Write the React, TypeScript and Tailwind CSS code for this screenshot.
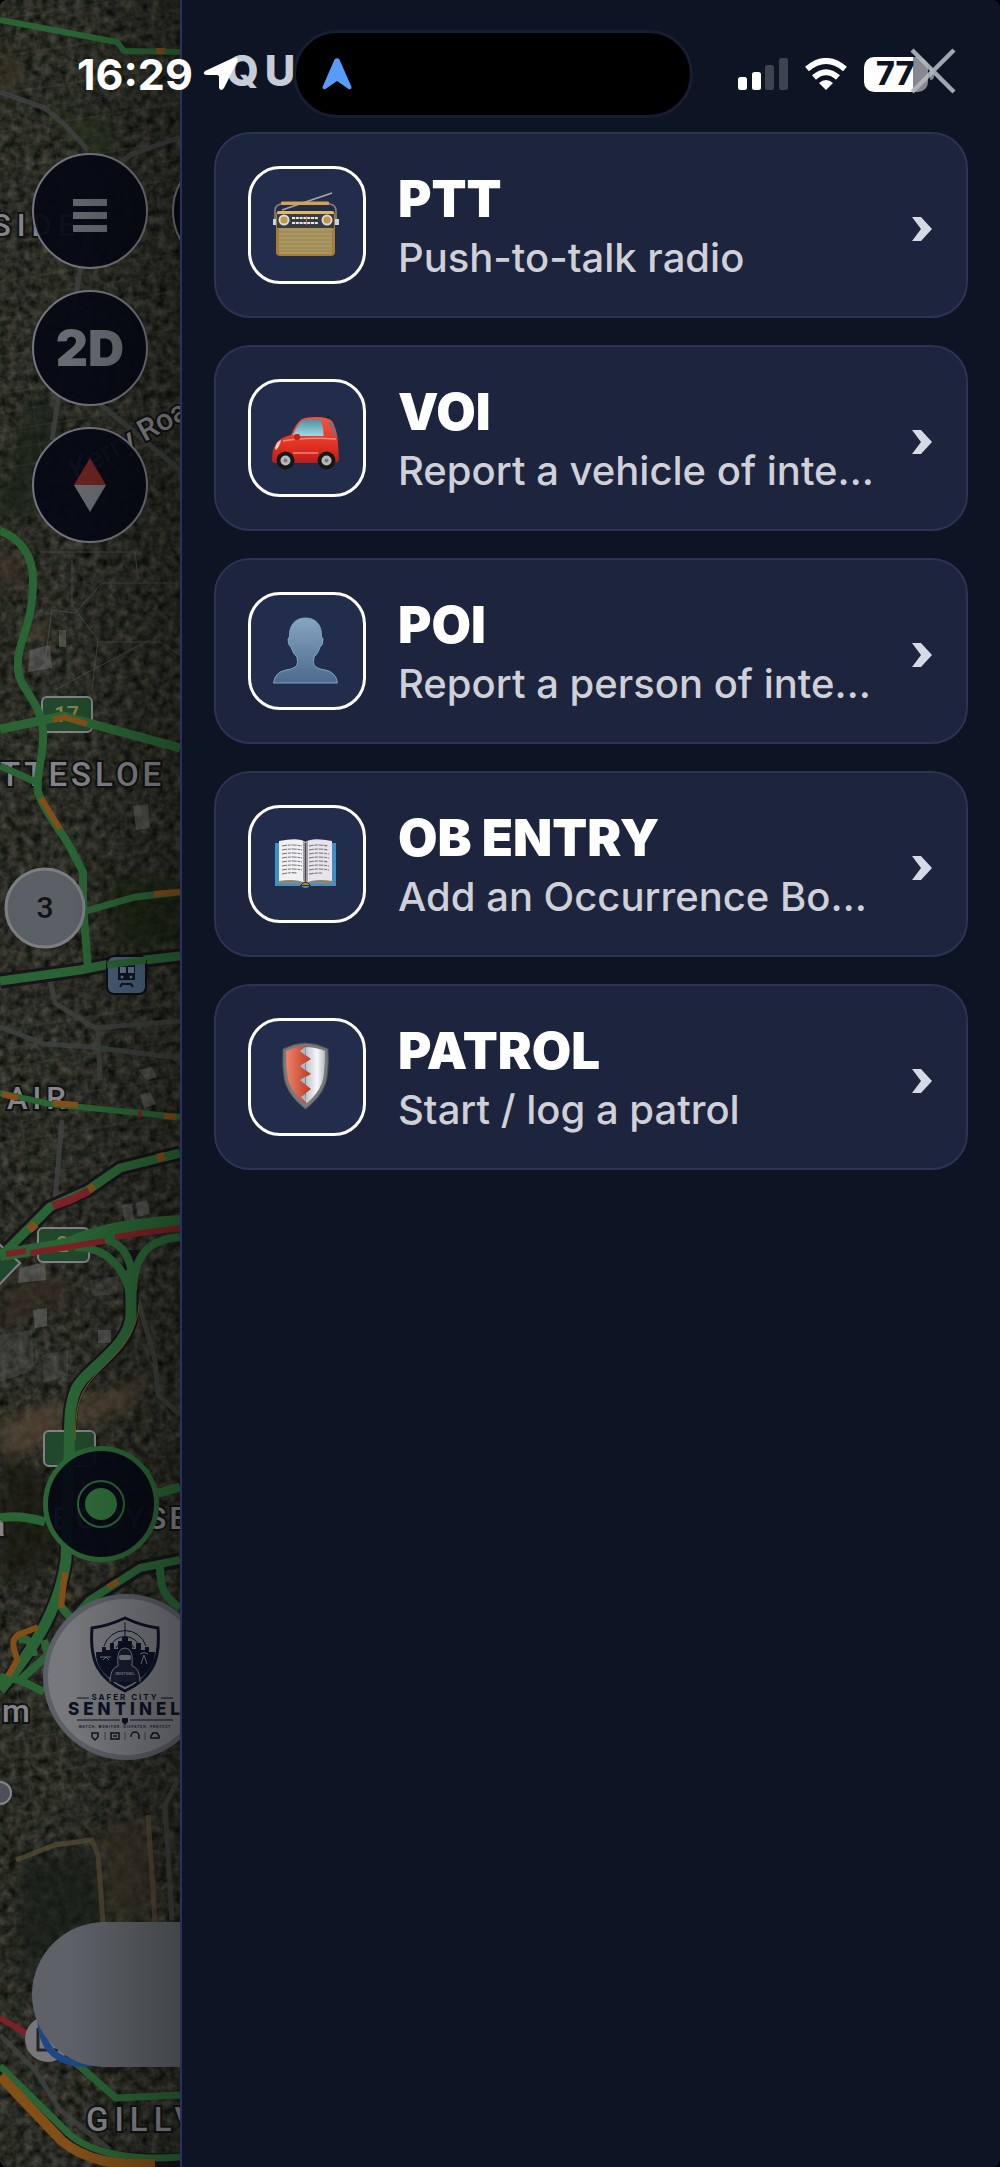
import React from 'react';

interface QuickAction {
  id: string;
  title: string;
  description: string;
  icon: React.ReactNode;
}

const RadioIcon = () => (
  <svg viewBox="0 0 72 72" className="w-18 h-18" aria-hidden="true">
    <path d="M11 21 L61 4" stroke="#a9a6a3" strokeWidth="1.6" />
    <path d="M4 34 V22 Q4 16 10 15 H59 Q65 16 65 22 V34" fill="none" stroke="#8d8578" strokeWidth="1.6" />
    <rect x="10" y="12.500" width="48" height="3.400" rx="1" fill="#d3a351" />
    <path d="M2 30 h4 v6 h-4 z M64 30 h4 v6 h-4 z" fill="#cdd3da" />
    <rect x="5" y="22" width="59" height="45" rx="4" fill="#a87c34" />
    <rect x="6" y="22" width="57" height="4" rx="2" fill="#e3b75f" />
    <rect x="6" y="25" width="57" height="14" fill="#393b40" />
    <rect x="8" y="39" width="53" height="26" rx="1.500" fill="#a99660" />
    <path d="M8 43 H61 M8 47 H61 M8 51 H61 M8 55 H61 M8 59 H61 M8 62 H61" stroke="#95824c" strokeWidth="0.800" />
    <circle cx="13" cy="31" r="5.500" fill="#dcdad5" />
    <circle cx="13" cy="31" r="3.600" fill="#c1964a" />
    <circle cx="56" cy="31" r="5.500" fill="#dcdad5" />
    <circle cx="56" cy="31" r="3.600" fill="#c1964a" />
    <path d="M21 29 H47 M21 34 H47" stroke="#e8e8e6" strokeWidth="2" strokeDasharray="3 0.800" />
    <path d="M35.500 27 V36" stroke="#d2642c" strokeWidth="1" />
  </svg>
);

const CarIcon = () => (
  <svg viewBox="0 0 72 72" className="w-18 h-18" aria-hidden="true">
    <defs>
      <linearGradient id="carBody" x1="0" y1="0" x2="0" y2="1">
        <stop offset="0" stopColor="#f2543f" />
        <stop offset="0.600" stopColor="#e23325" />
        <stop offset="1" stopColor="#b81c17" />
      </linearGradient>
      <linearGradient id="carGlass" x1="0" y1="0" x2="0" y2="1">
        <stop offset="0" stopColor="#4c92ab" />
        <stop offset="1" stopColor="#a5d6e4" />
      </linearGradient>
    </defs>
    <path d="M56 17 L57.500 14" stroke="#111" strokeWidth="1" />
    <path d="M1 58 Q1 46 6 40 Q11 35 20 33 Q25 21 31 17 Q36 15 45 15 Q57 15 61 19 Q66 27 67 40 L68 58 Q67 61 62 61 H5 Q1 61 1 58 Z" fill="url(#carBody)" />
    <path d="M22 33 Q27 21 32 18.500 Q40 17 50 18 Q53 26 52.500 34 H24 Z" fill="url(#carGlass)" />
    <path d="M58 20 Q62 24 65 34" stroke="#4c7f94" strokeWidth="2" fill="none" />
    <path d="M4 46 Q6 39 10 38 Q9 44 5 48 Z" fill="#f6d5cc" />
    <path d="M12 39 Q34 35 65 37" stroke="#f98a74" strokeWidth="1.500" fill="none" />
    <path d="M22 51 H47" stroke="#f98a74" strokeWidth="1.400" />
    <rect x="23" y="32" width="6" height="6" rx="2" fill="#c22018" />
    <circle cx="14.500" cy="58.500" r="9" fill="#161616" />
    <circle cx="14.500" cy="58.500" r="5" fill="#b8b8ba" />
    <circle cx="14.500" cy="58.500" r="2" fill="#78787a" />
    <circle cx="55.500" cy="58.500" r="9" fill="#161616" />
    <circle cx="55.500" cy="58.500" r="5" fill="#b8b8ba" />
    <circle cx="55.500" cy="58.500" r="2" fill="#78787a" />
  </svg>
);

const PersonIcon = () => (
  <svg viewBox="0 0 72 72" className="w-18 h-18" aria-hidden="true">
    <defs>
      <linearGradient id="bust" x1="0" y1="0" x2="0" y2="1">
        <stop offset="0" stopColor="#86a5c2" />
        <stop offset="1" stopColor="#4b6a8d" />
      </linearGradient>
    </defs>
    <path
      d="M34.500 3 C44 3 51 9 50.500 22 Q53 23 51.500 28 Q51 31 49 32 Q47 39 43 42 Q42 47 43 50 Q46 54 54 55 Q65 57 66.500 68 H2.500 Q4 57 15 55 Q23 54 26 50 Q27 47 26 42 Q22 39 20 32 Q18 31 17.500 28 Q16 23 18.500 22 C18 9 25 3 34.500 3 Z"
      fill="url(#bust)"
      stroke="#7ba6c6"
      strokeWidth="1"
    />
  </svg>
);

const BookIcon = () => (
  <svg viewBox="0 0 72 72" className="w-18 h-18" aria-hidden="true">
    <path d="M4 15 H65 V58 H39 Q34.500 62 30 58 H4 Z" fill="#3f90c6" />
    <path d="M7 53 Q22 50 34.500 56 Q47 50 62 53 V56 H7 Z" fill="#8b8478" />
    <path d="M8 13 Q28 9 34.500 14 V55 Q24 50 8 53 Z" fill="#f1f0f3" />
    <path d="M61 13 Q41 9 34.500 14 V55 Q45 50 61 53 Z" fill="#e6e4ea" />
    <path d="M32 13 Q34.500 14 34.500 16 Q34.500 14 37 13 V53 L34.500 55 L32 53 Z" fill="#a09ca2" />
    <path d="M34.500 15 V55" stroke="#4a474c" strokeWidth="1.200" />
    <path
      d="M11 18 Q22 16 31 18 M11 22 Q22 20 31 22 M11 26 Q22 24 31 26 M11 30 Q22 28 31 30 M11 34 Q22 32 31 34 M11 38 Q22 36 31 38 M11 42 Q22 40 31 42 M11 46 Q20 44 26 45 M38 18 Q47 16 57 18 M38 22 Q47 20 57 22 M38 26 Q47 24 58 26 M38 30 Q47 28 58 30 M38 34 Q47 32 57 34 M38 38 Q47 36 58 38 M38 42 Q47 40 58 42 M38 46 Q44 45 51 45"
      stroke="#77747c"
      strokeWidth="1.100"
      strokeDasharray="5 0.800 3 0.800"
      fill="none"
    />
    <path d="M29.500 57.500 Q34.500 51 39.500 57.500 Z" fill="#b88b28" stroke="#3a2c14" strokeWidth="1" />
  </svg>
);

const ShieldIcon = () => (
  <svg viewBox="0 0 72 72" className="w-18 h-18" aria-hidden="true">
    <defs>
      <linearGradient id="shieldRed" x1="0" y1="0" x2="1" y2="0">
        <stop offset="0" stopColor="#f0826b" />
        <stop offset="1" stopColor="#b93b22" />
      </linearGradient>
      <linearGradient id="shieldWhite" x1="0" y1="0" x2="1" y2="0">
        <stop offset="0" stopColor="#b9c2cd" />
        <stop offset="0.600" stopColor="#f7f8fa" />
        <stop offset="1" stopColor="#b4bbc2" />
      </linearGradient>
    </defs>
    <path d="M34.500 2 Q45 2 57 8 Q58 34 54 44 Q49 57 34.500 68 Q20 57 15 44 Q11 34 12 8 Q24 2 34.500 2 Z" fill="#77787a" stroke="#525356" strokeWidth="1" />
    <path d="M34.500 6 Q44 6 54 10 Q54 33 51 42 Q46 54 35 63 Z" fill="url(#shieldWhite)" />
    <path d="M37 5 L29 10 L40 18 L29 25 L40 33 L29 39 L40 48 L30 56 L36 62 L34.500 63 Q23 54 18 42 Q15 33 15 10 Q26 5 37 5 Z" fill="url(#shieldRed)" />
    <path d="M34 6 L29 10 L34 14 Z M34 21.500 L29 25 L34 29 Z M34 36 L29 39 L34 43 Z M34 53 L30 56 L35 61 Z" fill="#aeb9c6" />
  </svg>
);

const QUICK_ACTIONS: QuickAction[] = [
  { id: 'ptt', title: 'PTT', description: 'Push-to-talk radio', icon: <RadioIcon /> },
  { id: 'voi', title: 'VOI', description: 'Report a vehicle of interest', icon: <CarIcon /> },
  { id: 'poi', title: 'POI', description: 'Report a person of interest', icon: <PersonIcon /> },
  { id: 'ob', title: 'OB ENTRY', description: 'Add an Occurrence Book entry', icon: <BookIcon /> },
  { id: 'patrol', title: 'PATROL', description: 'Start / log a patrol', icon: <ShieldIcon /> },
];

const MapCanvas = () => (
  <svg
    viewBox="0 0 180 2167"
    preserveAspectRatio="xMinYMin slice"
    className="absolute inset-0 w-full h-full"
    aria-hidden="true"
  >
    <defs>
      <filter id="ground" x="0" y="0" width="100%" height="100%" colorInterpolationFilters="sRGB">
        <feTurbulence type="fractalNoise" baseFrequency="0.120" numOctaves="4" seed="4" />
        <feColorMatrix values="0.300 0.100 0 0 -0.035  0.280 0.120 0 0 -0.030  0.260 0.080 0 0 -0.030  0 0 0 0 1" />
      </filter>
      <filter id="soft">
        <feGaussianBlur stdDeviation="7" />
      </filter>
      <pattern id="blocks" width="31" height="37" patternUnits="userSpaceOnUse" patternTransform="rotate(-9)">
        <path d="M0 0 H31 M0 19 H31 M0 0 V37" stroke="#4a4d48" strokeWidth="1" opacity="0.450" fill="none" />
      </pattern>
    </defs>

    <rect width="180" height="2167" fill="#23261f" />
    <rect width="180" height="2167" filter="url(#ground)" />

    {/* Parks, open ground and mine dumps */}
    <g filter="url(#soft)" opacity="0.650">
      <path d="M0 40 L25 70 L15 95 L0 90 Z" fill="#3a3424" />
      <path d="M45 90 L80 120 L120 130 L105 165 L70 140 Z" fill="#28301c" />
      <path d="M35 390 L60 420 L45 480 L10 530 L0 500 Z" fill="#172314" />
      <path d="M0 545 L22 560 L12 590 L0 585 Z" fill="#47382a" />
      <path d="M110 880 H180 V945 H115 Z" fill="#15200f" />
      <path d="M28 622 L50 625 L45 645 L28 640 Z" fill="#4b4130" />
      <path d="M0 1290 L60 1270 L70 1300 L0 1330 Z" fill="#352c22" />
      <path d="M60 1405 L150 1378 L130 1410 L70 1430 Z M0 1420 L60 1400 V1440 L0 1460 Z" fill="#5a4a38" />
      <path d="M0 1450 L60 1480 V1560 L0 1590 Z" fill="#12190f" />
      <path d="M18 1860 L95 1845 L102 1925 L40 1960 L20 1990 Z" fill="#131c14" />
      <path d="M102 1830 L150 1815 L155 1920 H105 Z" fill="#3a3627" />
    </g>
    <path d="M16 1860 L55 1845 L92 1840 L98 1855 L103 1922 M148 1815 L155 1922" fill="none" stroke="#5c5039" strokeWidth="5" opacity="0.650" />

    <rect y="0" width="180" height="470" fill="url(#blocks)" />
    <rect y="1000" width="180" height="180" fill="url(#blocks)" />
    <rect y="1690" width="180" height="100" fill="url(#blocks)" />
    <path
      d="M45 660 L52 610 L75 613 L102 583 H180 M72 560 V605 L98 640 L92 690 M98 642 H160 L180 655 M55 690 L92 670 L150 640 M40 552 H135 L138 580"
      fill="none"
      stroke="#4b4f4c"
      strokeWidth="1"
      opacity="0.800"
    />
    <g fill="#77777a" opacity="0.450">
      <path d="M30 650 L50 645 L52 668 L28 672 Z M133 806 L148 804 L150 828 L136 830 Z M59 630 h7 v17 h-7 Z M20 1268 L45 1262 L46 1280 L18 1283 Z M98 1330 h13 v13 h-13 Z M122 1205 l10 -2 l2 18 l-9 2 Z M136 1203 l11 -3 l3 14 l-12 3 Z M33 1310 l14 -2 v18 l-12 2 Z" />
      <path d="M138 1070 l14 -3 l5 10 l-10 3 z M140 1095 l10 -3 l6 12 l-12 4 z" />
      <path d="M0 1335 L32 1330 L34 1370 L0 1382 Z M42 1355 l26 -5 v25 l-24 8 z M90 1280 l28 -4 v18 l-26 2 z" opacity="0.500" />
    </g>

    {/* Unlit streets */}
    <g fill="none" stroke="#3e4240" strokeWidth="5" opacity="0.850">
      <path d="M0 92 L45 108 L65 125 L88 150" />
      <path d="M180 137 L130 155 L95 185 L75 300 L58 400 L52 440" />
      <path d="M100 404 L180 470" />
      <path d="M50 980 L55 1003 L95 1028 L180 1021 M0 1027 L45 1044 L90 1047 L180 1058 M98 1030 L100 1080" />
      <path d="M62 1120 L55 1200" />
      <path d="M138 1300 L155 1360 L158 1395 L180 1415" />
      <path d="M165 1805 L172 1920 M178 1780 L165 1805" />
      <path d="M0 2035 L35 2070 L60 2110 L110 2150" />
    </g>

    {/* Dark casing under the main roads */}
    <g fill="none" stroke="#17141a" strokeWidth="15">
      <path d="M0 981 L80 970 L110 964 L180 956" />
      <path d="M0 1257 L50 1207 L88 1190 L120 1168 L180 1153" />
      <path d="M131 1250 V1315 C129 1350 82 1370 75 1392 C68 1410 70 1430 69 1460 L66 1560 C62 1590 50 1630 0 1690" />
      <path d="M75 1612 L90 1600 L140 1568 L180 1560" />
      <path d="M0 2072 L66 2140 C90 2158 130 2163 180 2160" />
    </g>

    {/* Route shields */}
    <g fill="#21482a" stroke="#828087" strokeWidth="2">
      <rect x="42" y="697" width="50" height="35" rx="5" />
      <rect x="38" y="1228" width="51" height="34" rx="5" />
      <rect x="44" y="1431" width="51" height="35" rx="5" />
      <path d="M-2 1243 L20 1263 L-2 1286 Z" />
    </g>
    <text x="54" y="722" fontSize="22" fill="#887f45" className="font-['Roboto',sans-serif] font-medium">17</text>
    <text x="56" y="1252" fontSize="22" fill="#887f45" className="font-['Roboto',sans-serif] font-medium">2</text>

    <g fill="#848389" stroke="#101311" strokeWidth="4" paintOrder="stroke" className="font-['Roboto',sans-serif] font-medium">
      <text x="-8" y="236" fontSize="31" letterSpacing="6">SIDE</text>
      <text x="0" y="786" fontSize="33" letterSpacing="4">TTESLOE</text>
      <text x="7" y="1109" fontSize="31" letterSpacing="5">AIR</text>
      <text x="52" y="1529" fontSize="32" letterSpacing="3">BOOYSE</text>
      <text x="2" y="1722" fontSize="32">m</text>
      <text x="-12" y="1536" fontSize="32">a</text>
      <text x="86" y="2131" fontSize="33" letterSpacing="6">GILLVI</text>
      <text x="0" y="0" fontSize="30" transform="translate(76 480) rotate(-29)">Kerry Road</text>
    </g>

    {/* Live traffic */}
    <g fill="none" stroke="#2a6434" strokeWidth="8" strokeLinejoin="round">
      <path d="M0 20 L117 42 L124 51 L180 52" strokeWidth="6" />
      <path d="M0 531 C20 538 33 555 33 580 C33 630 16 640 18 670 C20 690 40 700 43 730 C45 755 35 775 38 792 C45 815 66 835 74 855 L83 872 L83 905 L88 968" />
      <path d="M0 729 L63 716 L180 748" strokeWidth="9" />
      <path d="M0 766 L38 783" strokeWidth="7" />
      <path d="M86 911 L135 897 L180 892" strokeWidth="7" />
      <path d="M0 981 L80 970 L110 964 L180 956" strokeWidth="9" />
      <path d="M0 1093 L50 1104 L180 1117" strokeWidth="6" />
      <path d="M0 1257 L50 1207 L88 1190 L120 1168 L180 1153" strokeWidth="9" />
      <path d="M0 1255 L80 1242 L130 1230 L180 1224" strokeWidth="12" />
      <path d="M60 1245 C100 1225 140 1222 180 1219" />
      <path d="M75 1247 C108 1247 126 1270 130 1295 M95 1237 C120 1240 130 1252 133 1280 M180 1237 C150 1240 135 1252 133 1290" />
      <path d="M131 1270 V1315 C129 1350 82 1370 75 1392 C68 1410 70 1430 69 1460 L66 1560 C62 1590 50 1630 0 1690" strokeWidth="11" />
      <path d="M0 1518 Q20 1514 45 1522 M155 1494 L180 1487" strokeWidth="9" />
      <path d="M20 1680 L48 1655 L44 1640 M60 1605 L72 1620 L90 1600 L140 1568 L180 1560 M160 1565 C160 1590 165 1597 180 1608 M0 1677 L20 1680 L44 1692 M18 1640 Q32 1635 34 1656" />
      <path d="M75 2062 L116 2098 L180 2095" strokeWidth="7" />
      <path d="M0 2066 L68 2133 C90 2153 130 2161 180 2157" strokeWidth="7" />
    </g>
    <g fill="none" stroke="#824f18" strokeWidth="6">
      <path d="M156 51 H165" />
      <path d="M53 720 L64 717 L87 724 M41 798 L60 829" />
      <path d="M154 894 L180 892" />
      <path d="M2 1094 L18 1098 M53 1103 L78 1105 M164 1116 L176 1117" />
      <path d="M29 1230 L36 1224 M89 1190 L94 1186 M157 1158 L165 1156" strokeWidth="8" />
      <path d="M65 1572 L61 1608 M108 1587 L118 1581" />
      <path d="M38 1627 L18 1635 C8 1642 17 1655 17 1660 L8 1676" />
      <path d="M0 2076 L62 2141 C85 2160 115 2166 155 2164" strokeWidth="10" />
    </g>
    <path d="M139 1305 C137 1345 95 1370 84 1390 C76 1405 76 1420 75 1440" fill="none" stroke="#7d5228" strokeWidth="1" />
    <g fill="none" stroke="#7c2226" strokeWidth="6">
      <path d="M53 1206 L70 1200 L89 1191" strokeWidth="8" />
      <path d="M6 1254 L26 1251 M30 1253 L105 1241 M115 1237 L142 1233 L180 1228" />
      <path d="M138 1114 H142 M108 963 H112" />
      <path d="M0 2018 L26 2033" />
    </g>

    {/* Transit stop */}
    <rect x="107" y="956" width="39" height="38" rx="7" fill="#485f79" stroke="#0b0e14" strokeWidth="2" />
    <path d="M118 965 h17 v15 h-17 z" fill="#10141d" />
    <path d="M120 967 h6 v6 h-6 z M128 967 h6 v6 h-6 z" fill="#5d7693" />
    <circle cx="122" cy="977" r="1.500" fill="#5d7693" />
    <circle cx="131" cy="977" r="1.500" fill="#5d7693" />
    <path d="M120 987 L122 984 H131 L133 987" fill="none" stroke="#10141d" strokeWidth="2" />
    <path d="M107 965 L146 960" stroke="#2a6434" strokeWidth="7" />

    {/* Cluster marker */}
    <circle cx="45" cy="908" r="39" fill="#5b6067" stroke="#7d7e82" strokeWidth="3" />
    <text x="45" y="918" fontSize="30" textAnchor="middle" fill="#101214" className="font-['Roboto',sans-serif] font-medium">3</text>

    <circle cx="0" cy="1793" r="11" fill="#4c4f58" stroke="#85868a" strokeWidth="2" />
    <circle cx="48" cy="2039" r="23" fill="#77767b" />
    <path d="M38 2028 V2050 H58" fill="none" stroke="#22251f" strokeWidth="3" />
    <path d="M41 2022 C42 2050 60 2066 90 2063" fill="none" stroke="#1d4885" strokeWidth="7" />
  </svg>
);

const SentinelLogo = () => (
  <svg viewBox="0 0 166 166" className="w-[166px] h-[166px] shrink-0" role="img" aria-label="Safer City Sentinel">
    <g fill="none" stroke="#0b1224">
      <path d="M82 24 Q99 32 115 34 Q117 60 109 74 Q101 88 82 97 Q63 88 55 74 Q47 60 49 34 Q65 32 82 24 Z" strokeWidth="3" />
      <path d="M61 52 A22 22 0 0 1 103 52 M67 53 A16 16 0 0 1 97 53 M73 54 A10 10 0 0 1 91 54 M82 28 V46" strokeWidth="1" />
    </g>
    <path d="M53 58 h6 v-5 h4 v3 h4 v-7 h4 v6 h4 v-8 h4 v-4 h6 v4 h4 v8 h4 v-6 h5 v7 h4 v-3 h4 v5 h6 Q112 80 82 93 Q52 80 53 58 Z" fill="#0b1224" />
    <path d="M67 88 Q67 74 75 72 Q73 54 82 54 Q91 54 89 72 Q97 74 97 88" fill="#161d30" stroke="#77787c" strokeWidth="1" />
    <rect x="76" y="61" width="12" height="5" rx="2" fill="#77787c" />
    <path d="M57 63 h11 M60 66 l3 -3 l3 3 M98 70 l3 -9 l3 9 M97 60 q4 -3 8 0" stroke="#77787c" strokeWidth="1" fill="none" />
    <text x="82" y="81" fontSize="4" textAnchor="middle" fill="#77787c" className="font-['Inter',sans-serif] font-bold">SENTINEL</text>
    <path d="M34 104 H46 M118 104 H130 M34 126 H77 M87 126 H130" stroke="#0b1224" strokeWidth="1" />
    <text x="82" y="106" fontSize="8" letterSpacing="2" textAnchor="middle" fill="#0b1224" className="font-['Inter',sans-serif] font-bold">SAFER CITY</text>
    <text x="25" y="121" fontSize="17" letterSpacing="4" fill="#0b1224" className="font-['Inter',sans-serif] font-extrabold">SENTINEL</text>
    <path d="M79 124 h6 v4 l-3 3 l-3 -3 z" fill="#0b1224" />
    <text x="82" y="134" fontSize="3" letterSpacing="1" textAnchor="middle" fill="#0b1224" className="font-['Inter',sans-serif] font-bold">WATCH. MONITOR. DISPATCH. PROTECT</text>
    <g fill="none" stroke="#0b1224" strokeWidth="1.500">
      <path d="M49 139 h6 v4 l-3 3 l-3 -3 z M68 139 h8 v6 h-8 z M70 142 h4 M88 143 v-1 a4 4 0 0 1 8 0 v3 M108 144 v-2 l2 -3 h4 l2 3 v2 z" />
      <path d="M62 138 V146 M82 138 V146 M102 138 V146" strokeWidth="0.500" />
    </g>
  </svg>
);

const mapButton = 'w-29 h-29 shrink-0 rounded-full border-2 border-[#74757c] bg-[#060a15]/95 flex items-center justify-center';

const MapPane = () => (
  <section className="relative w-[18%] shrink-0 overflow-hidden bg-[#23261f]" aria-label="Map">
    <MapCanvas />

    {/* Floating map controls */}
    <div className="absolute top-[153px] left-8 flex flex-col gap-[21px]">
      <div className="flex gap-6">
        <button className={mapButton} aria-label="Menu">
          <span className="flex flex-col gap-[6px] pt-2">
            <span className="block w-[34px] h-[7px] bg-[#63666c]" />
            <span className="block w-[34px] h-[7px] bg-[#63666c]" />
            <span className="block w-[34px] h-[7px] bg-[#63666c]" />
          </span>
        </button>
        <button className={mapButton} aria-label="Layers" />
      </div>
      <button className={`${mapButton} text-[50px] leading-none font-black text-[#686c71]`}>2D</button>
      <button className={mapButton} aria-label="Reset north">
        <svg viewBox="0 0 32 54" className="w-8 h-[54px]" aria-hidden="true">
          <path d="M16 0 L32 27 H0 Z" fill="#6b2320" />
          <path d="M0 27 H32 L16 54 Z" fill="#676b6f" />
        </svg>
      </button>
    </div>

    <button
      className="absolute top-[1446px] left-[43px] w-29 h-29 rounded-full border-[5px] border-[#2a6434] bg-[#060a15]/95 flex items-center justify-center"
      aria-label="My location"
    >
      <span className="w-12 h-12 rounded-full border-2 border-[#2a6434] p-[6px]">
        <span className="block w-full h-full rounded-full bg-[#2f6c38]" />
      </span>
    </button>

    <button className="absolute top-[1594px] left-[43px] w-[166px] h-[166px] rounded-full border-[5px] border-[#5c5f68] bg-[#77787c] flex items-center justify-center">
      <SentinelLogo />
    </button>

    <div className="absolute bottom-[100px] left-8 w-[300px] h-[145px] rounded-full bg-[#5e6268]" />

    {/* Shadow cast by the drawer */}
    <div className="absolute inset-y-0 right-0 w-28 bg-linear-to-r from-black/0 to-black/30 pointer-events-none" />
  </section>
);

const ActionCard: React.FC<{ action: QuickAction }> = ({ action }) => (
  <button className="w-full flex items-center gap-8 text-left rounded-[36px] border-2 border-[#2c3453] bg-[#1d243d] pl-8 pr-[34px] py-[29px]">
    <span className="w-[118px] h-[118px] shrink-0 rounded-[32px] border-[3px] border-white bg-[#212d4a] flex items-center justify-center">
      {action.icon}
    </span>
    <span className="flex-1 min-w-0 pt-[6px]">
      <span className="block text-[51px] leading-[60px] font-black text-white">{action.title}</span>
      <span className="block text-[40px] leading-[58px] font-medium text-[#cfd0d8] truncate">{action.description}</span>
    </span>
    <svg viewBox="0 0 20 24" className="w-5 h-6 mt-2 shrink-0" aria-hidden="true">
      <path d="M0 0 H9 L20 12 L9 24 H0 L9 12 Z" fill="#d5dbe6" />
    </svg>
  </button>
);

const StatusBar = () => (
  <div className="absolute top-0 inset-x-0 h-[148px] flex items-center pl-[77px] pr-[66px] pointer-events-none">
    <div className="flex w-[216px] items-center gap-[10px]">
      <span className="text-[43px] leading-none font-bold text-white">16:29</span>
      <svg viewBox="0 0 36 34" className="w-9 h-[34px]" aria-hidden="true">
        <path d="M2 14 L30 1 Q36 -1 34 5 L21 31 Q18 35 16 31 V20 Q16 18 14 18 L3 18 Q-1 17 2 14 Z" fill="#fff" />
      </svg>
    </div>
    <div className="w-[400px] h-[88px] shrink-0 rounded-full border-[3px] border-[#181e31] bg-black flex items-center pl-[26px]">
      <svg viewBox="0 0 30 32" className="w-[30px] h-8" aria-hidden="true">
        <path d="M12.500 1.500 Q15 -1 17.500 1.500 L29.500 29 Q29.500 32 26.500 31 L15 23 L3.500 31 Q0.500 32 0.500 29 Z" fill="#569cf8" />
      </svg>
    </div>
    <div className="flex flex-1 items-center justify-end gap-4">
      <svg viewBox="0 0 50 32" className="w-[50px] h-8" aria-hidden="true">
        <rect x="0" y="19" width="9" height="13" rx="2.500" fill="#fff" />
        <rect x="14" y="14" width="9" height="18" rx="2.500" fill="#fff" />
        <rect x="27" y="7" width="9" height="25" rx="2.500" fill="#3e434f" />
        <rect x="41" y="0" width="9" height="32" rx="2.500" fill="#3e434f" />
      </svg>
      <svg viewBox="0 0 44 32" className="w-11 h-8" aria-hidden="true">
        <path d="M3 11 Q22 -5 41 11" fill="none" stroke="#fff" strokeWidth="6" />
        <path d="M10 19.500 Q22 9 34 19.500" fill="none" stroke="#fff" strokeWidth="6" />
        <path d="M22 32 L15 25 Q22 19 29 25 Z" fill="#fff" />
      </svg>
      <div className="flex items-center gap-[2px]">
        <span className="w-16 h-[35px] rounded-[10px] bg-linear-to-r from-white from-77% to-[#85888f] to-77% flex items-center pl-3 text-[32px] leading-none font-extrabold text-[#0d1423]">
          77
        </span>
        <span className="w-1 h-3 rounded-r-full bg-[#85888f]" />
      </div>
    </div>
  </div>
);

export default function App() {
  return (
    <div className="bg-black">
      <div className="relative min-h-screen flex overflow-hidden rounded-lg bg-[#0d1423] font-['Inter',sans-serif]">
        <MapPane />

        <aside className="flex-1 min-w-0 border-l-2 border-[#29315a] bg-[#0d1423] px-8">
          <header className="flex items-center justify-between h-[132px] pt-[10px] pl-3 pr-3">
            <h1 className="text-[42px] leading-none font-extrabold tracking-[6px] text-[#c6ccd8]">QU</h1>
            <button aria-label="Close" className="relative z-10">
              <svg viewBox="0 0 46 46" className="w-[46px] h-[46px]" aria-hidden="true">
                <path d="M2 2 L44 44 M44 2 L2 44" stroke="#b4b7bf" strokeOpacity="0.900" strokeWidth="4.500" />
              </svg>
            </button>
          </header>

          <nav className="flex flex-col gap-[27px]" aria-label="Quick actions">
            {QUICK_ACTIONS.map((action) => (
              <ActionCard key={action.id} action={action} />
            ))}
          </nav>
        </aside>

        <StatusBar />
      </div>
    </div>
  );
}
